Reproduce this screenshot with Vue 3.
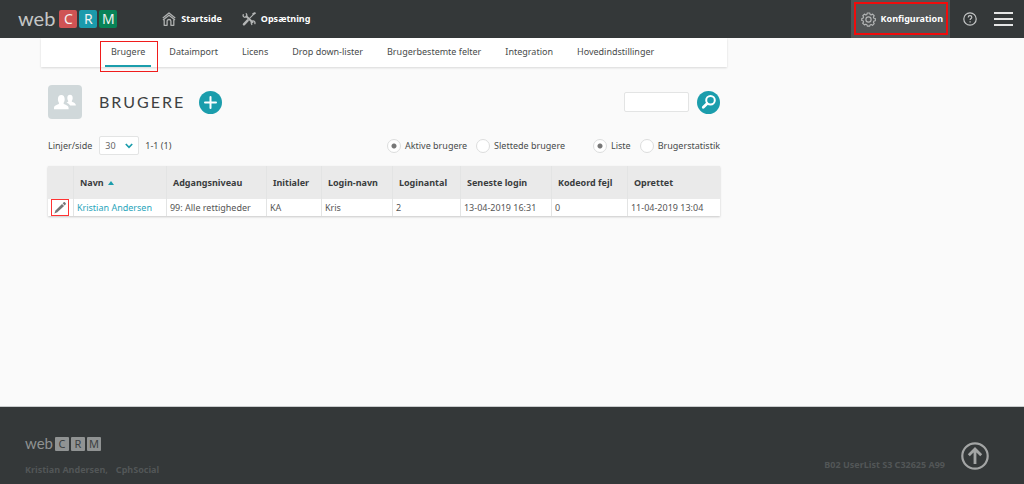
<script setup>
import { ref } from 'vue'

const tabs = ['Brugere', 'Dataimport', 'Licens', 'Drop down-lister', 'Brugerbestemte felter', 'Integration', 'Hovedindstillinger']
const logo = ['C', 'R', 'M']
const columns = [
  { label: 'Navn', sorted: true, cls: 'c-name' },
  { label: 'Adgangsniveau', cls: 'c-level' },
  { label: 'Initialer', cls: 'c-init' },
  { label: 'Login-navn', cls: 'c-login' },
  { label: 'Loginantal', cls: 'c-count' },
  { label: 'Seneste login', cls: 'c-last' },
  { label: 'Kodeord fejl', cls: 'c-fail' },
  { label: 'Oprettet', cls: 'c-created' }
]
const users = [
  { name: 'Kristian Andersen', rest: ['99: Alle rettigheder', 'KA', 'Kris', '2', '13-04-2019 16:31', '0', '11-04-2019 13:04'] }
]
const status = ref('active')
const view = ref('list')
const pageSize = ref('30')
const search = ref('')
</script>

<template>
  <div class="page">
    <header class="topbar">
      <a href="#" class="logo" aria-label="webCRM">
        <span class="web">web</span>
        <span v-for="l in logo" :key="l" class="tile" :class="'tile-' + l.toLowerCase()">{{ l }}</span>
      </a>
      <nav class="mainnav" aria-label="Hovedmenu">
        <a href="#">
          <svg width="14" height="14" viewBox="0 0 14 14" fill="none" stroke="#aeb0b0" stroke-width="1.3" stroke-linejoin="round">
            <path d="M.8 6.1 7 1l6.200 5.100" /><path d="M1 8.100 7 3.200l6 4.900" />
            <path d="M2.200 7.500v5.800h2.900V9.200c0-1 .8-1.700 1.900-1.700s1.900.7 1.900 1.700v4.100h2.900V7.500" />
          </svg>
          Startside
        </a>
        <a href="#">
          <svg width="14" height="14" viewBox="0 0 14 14" fill="none" stroke="#b4b6b6" stroke-linecap="round">
            <path d="M4.300 4.300l6.200 6" stroke-width="1.900" />
            <path d="M1.200 2.600c-.5 1.700.6 3 2.200 2.600C5 4.900 5.300 3 4.200 1.700" stroke-width="1.300" />
            <path d="M12.900 11.600c.4-1.600-.7-2.900-2.100-2.700-1.700.3-2 2.100-1 3.600" stroke-width="1.300" />
            <path d="M12.600 1.400 7.800 6.200" stroke-width="1.100" /><path d="M12.900 1.100l-1.700.8" stroke-width="1.800" />
            <path d="M5.700 8.300 1.900 12.300" stroke-width="2.400" />
          </svg>
          Opsætning
        </a>
      </nav>
      <a href="#" class="config">
        <svg width="15" height="15" viewBox="0 0 16 16" fill="none" stroke="#b4b6b6" stroke-width="1.200" stroke-linejoin="round">
          <path d="M6.700 1h2.600l.4 1.600 1.100.5 1.500-.9 1.800 1.800-.9 1.500.5 1.100 1.600.4v2.300l-1.600.4-.5 1.200.9 1.500-1.800 1.800-1.500-.9-1.100.5L9.300 15H6.700l-.4-1.500-1.200-.5-1.400.8-1.900-1.800.9-1.500-.5-1.200L.8 9.100V6.900l1.500-.4.5-1.100L1.900 4l1.800-1.800 1.400.9 1.200-.5z" />
          <circle cx="8" cy="8" r="2.800" />
        </svg>
        Konfiguration
      </a>
      <button class="plain help" aria-label="Hjælp">
        <svg width="14" height="14" viewBox="0 0 14 14" fill="none" stroke="#c4c6c6" stroke-width="1.200">
          <circle cx="7" cy="7" r="6.200" /><path d="M5.200 5.500c0-1.100.8-1.800 1.800-1.800s1.800.7 1.800 1.600c0 1.300-1.700 1.300-1.700 2.800M7.100 9.300v1.300" />
        </svg>
      </button>
      <button class="plain burger" aria-label="Menu"><i></i><i></i><i></i></button>
    </header>

    <main class="content">
      <nav class="tabs" aria-label="Konfiguration">
        <a v-for="(t, i) in tabs" :key="t" href="#" :class="{ current: i === 0 }">{{ t }}</a>
      </nav>

      <div class="body">
        <div class="title">
          <span class="badge">
            <svg width="22" height="16" viewBox="0 0 22 16" fill="#fff">
              <path d="M12.500 8.500c.9-.4 1.800-.8 1.800-1.300 0-.6-1-1.200-1-3.300C13.300 2 14.400.8 16 .8s2.700 1.200 2.700 3.100c0 2.100-1 2.700-1 3.300 0 1.100 4.200 1 4.200 4.400h-5.700c-.8-1.400-2-2.200-3.700-3.100z" />
              <path d="M0 15.200v-1.300c0-3.300 5.100-3.100 5.100-4.700 0-.8-1.200-1.500-1.200-4C3.900 2.600 5.200 1 7.300 1s3.400 1.600 3.400 4.200c0 2.500-1.200 3.200-1.200 4 0 1.600 5.100 1.400 5.100 4.700v1.300z" />
            </svg>
          </span>
          <h1>BRUGERE</h1>
          <button class="plain" aria-label="Tilføj bruger">
            <svg width="23" height="23" viewBox="0 0 23 23"><circle cx="11.500" cy="11.500" r="11.500" fill="#1b9dac" /><path d="M11.500 6v11M6 11.500h11" stroke="#fff" stroke-width="2" stroke-linecap="round" /></svg>
          </button>
          <input v-model="search" class="search" type="text" aria-label="Søg" />
          <button class="plain" aria-label="Søg brugere">
            <svg width="23" height="23" viewBox="0 0 23 23" fill="none" stroke="#fff"><circle cx="11.500" cy="11.500" r="11.500" fill="#1b9dac" stroke="none" /><circle cx="13.500" cy="9.300" r="4.300" stroke-width="2" /><path d="M10.200 12.600 6.300 16.300" stroke-width="2.800" stroke-linecap="round" /></svg>
          </button>
        </div>

        <div class="filters">
          <label for="size">Linjer/side</label>
          <span class="select">
            <select id="size" v-model="pageSize"><option>30</option><option>50</option></select>
            <svg width="8" height="6" viewBox="0 0 8 6" fill="none" stroke="#1b9dac" stroke-width="1.700"><path d="M.8 1 4 4.300 7.200 1" /></svg>
          </span>
          <span>1-1 (1)</span>
          <div class="radios first">
            <label><input v-model="status" type="radio" name="status" value="active" />Aktive brugere</label>
            <label><input v-model="status" type="radio" name="status" value="deleted" />Slettede brugere</label>
          </div>
          <div class="radios">
            <label><input v-model="view" type="radio" name="view" value="list" />Liste</label>
            <label><input v-model="view" type="radio" name="view" value="stats" />Brugerstatistik</label>
          </div>
        </div>

        <table>
          <thead>
            <tr>
              <th class="c-edit" aria-label="Rediger"></th>
              <th v-for="c in columns" :key="c.label" :class="c.cls">
                {{ c.label }}<svg v-if="c.sorted" class="sort" width="6" height="4" viewBox="0 0 6 4"><path d="M3 0 6 4H0z" fill="#1b9dac" /></svg>
              </th>
            </tr>
          </thead>
          <tbody>
            <tr v-for="u in users" :key="u.name">
              <td class="edit">
                <button class="plain pencil" aria-label="Rediger bruger">
                  <svg width="14" height="14" viewBox="0 0 14 14" fill="#777"><path d="M10.500 1.400c.5-.5 1-.5 1.500 0l.6.600c.5.500.5 1 0 1.500l-.9.900-2.100-2.100z" /><path d="M9 2.900 11.100 5 4.300 11.200 1.400 12.600 2.500 9.400z" /></svg>
                </button>
              </td>
              <td><a href="#">{{ u.name }}</a></td>
              <td v-for="(v, i) in u.rest" :key="i">{{ v }}</td>
            </tr>
          </tbody>
        </table>
      </div>
    </main>

    <footer>
      <div class="owner">
        <div class="logo small">
          <span class="web">web</span>
          <span v-for="l in logo" :key="l" class="tile">{{ l }}</span>
        </div>
        <div class="names"><span>Kristian Andersen,</span><span>CphSocial</span></div>
      </div>
      <span class="build">B02 UserList S3 C32625 A99</span>
      <button class="plain" aria-label="Til toppen">
        <svg width="28" height="28" viewBox="0 0 28 28" fill="none" stroke="#a3a5a5"><circle cx="14" cy="14" r="12.700" stroke-width="2.200" /><path d="M14 22V8M7.800 13.200 14 7l6.200 6.200" stroke-width="2.800" /></svg>
      </button>
    </footer>
  </div>
</template>

<style>
body { background: #fafafa; }
</style>

<style scoped>
* { box-sizing: border-box; }
.page {
  min-height: 100vh;
  display: flex;
  flex-direction: column;
  font: 9px/12px "Noto Sans", sans-serif;
  color: #484b4b;
}
a { color: inherit; text-decoration: none; }
svg { display: block; flex: none; }
.plain { display: block; border: 0; padding: 0; background: none; cursor: pointer; }

.topbar { display: flex; align-items: center; height: 38px; padding: 0 11px 0 18px; background: #343839; color: #fff; }
.logo { display: flex; align-items: center; gap: 2px; color: #c4c6c6; }
.web { padding: 0 2px 2px 0; font: 400 20px/18px Lato, sans-serif; }
.tile { width: 18px; height: 18px; border-radius: 2px; font-size: 14px; line-height: 18px; text-align: center; color: #f2f2f2; }
.tile-c { background: #cf5354; }
.tile-r { background: #1b9aac; }
.tile-m { background: #088357; }
.mainnav { display: flex; gap: 20px; margin-left: 45px; font-weight: 700; }
.mainnav a { display: flex; align-items: center; gap: 5px; }
.config { display: flex; align-items: center; gap: 5px; height: 38px; margin-left: auto; padding: 0 7px 0 10px; background: #515455; font-weight: 700; position: relative; }
.config::after { content: ""; position: absolute; inset: 2px 2px 3px 3px; border: 2px solid #f00c0c; }
.help { margin: 0 17px 0 13px; }
.burger { width: 19px; display: flex; flex-direction: column; gap: 4px; }
.burger i { height: 2px; background: #e4e5e5; }

.content { flex: 1; width: 67%; margin-left: 4%; }
.tabs { display: flex; gap: 12px; height: 29px; padding-left: 64px; background: #fff; box-shadow: 0 1px 2px #0002; white-space: nowrap; }
.tabs a { padding: 8px 6px 0; }
.tabs .current { position: relative; border-bottom: 2px solid #1b9dac; }
.current::after { content: ""; position: absolute; inset: 3px -7px -7px -5px; border: 1px solid #f01c1c; }
.body { padding: 18px 7px 0; }
.title { display: flex; align-items: center; }
.badge { display: grid; place-items: center; width: 34px; height: 34px; border-radius: 4px; background: #d0d8da; }
h1 { margin: 0 14px 0 17px; font: 400 16px/22px Lato, sans-serif; letter-spacing: 2px; color: #3e4142; }
.search { width: 65px; height: 20px; margin: 0 8px 0 auto; border: 1px solid #e3e4e4; border-radius: 2px; background: #fff; font: inherit; }
.filters { display: flex; align-items: center; margin-top: 17px; white-space: nowrap; }
.select { position: relative; margin: 0 6px 0 7px; }
select { display: block; appearance: none; width: 40px; height: 19px; padding: 0 5px; border: 1px solid #e3e4e4; border-radius: 2px; background: #fff; font: inherit; color: #666; }
.select svg { position: absolute; right: 6px; top: 7px; pointer-events: none; }
.radios { display: flex; gap: 9px; margin-left: 28px; }
.radios.first { margin-left: auto; }
.radios label { display: flex; align-items: center; gap: 4px; }
.radios input { appearance: none; width: 14px; height: 14px; margin: 0; border: 1px solid #dcdddd; border-radius: 50%; background: #fff; }
.radios input:checked { background: radial-gradient(circle, #777 2px, #fff 3px); }

table { width: 100%; margin-top: 11px; table-layout: fixed; border-collapse: separate; border-spacing: 0; background: #fff; box-shadow: 0 1px 2px #0003; white-space: nowrap; }
th, td { border-left: 1px solid #e3e4e4; text-align: left; }
th:first-child, td:first-child { border-left: 0; }
th { height: 33px; padding: 0 0 0 6px; background: #eaeaea; font-weight: 700; color: #3a3d3e; }
td { height: 17px; padding: 0 0 0 3px; color: #555; }
td a { color: #2aa5bb; }
.c-edit { width: 25px; }
.c-name, .c-created { width: 93px; }
.c-level { width: 100px; }
.c-init { width: 55px; }
.c-login { width: 71px; }
.c-count { width: 68px; }
.c-last { width: 91px; }
.c-fail { width: 76px; }
.sort { display: inline-block; margin-left: 4px; vertical-align: 1px; }
.pencil { display: grid; place-items: center; width: 18px; height: 17px; border: 1px solid #f33; }

footer { display: flex; align-items: center; height: 78px; padding: 20px 35px 0 25px; border-top: 1px solid #c9cccd; background: #343839; color: #525657; font-weight: 700; }
.small { gap: 2px; color: #8f9292; }
.small .web { padding-right: 0; font-size: 15px; line-height: 14px; }
.small .tile { width: 14px; height: 14px; border-radius: 1px; background: #909393; color: #3d4142; font-size: 11px; line-height: 14px; font-weight: 400; }
.names { display: flex; gap: 8px; margin-top: 12px; }
.build { margin: 19px 16px 0 auto; }
</style>
